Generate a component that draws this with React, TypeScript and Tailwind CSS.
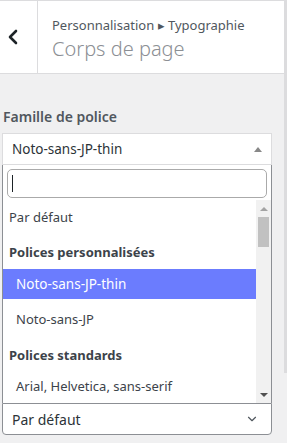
import { ChevronDown, ChevronLeft } from "lucide-react";

const font = { fontFamily: '"Noto Sans", "Open Sans", sans-serif' };

type Row = { label: string; kind: "option" | "group" | "child" | "active"; h: string };

const rows: Row[] = [
  { label: "Par défaut", kind: "option", h: "h-[36px]" },
  { label: "Polices personnalisées", kind: "group", h: "h-[33px]" },
  { label: "Noto-sans-JP-thin", kind: "active", h: "h-[30px]" },
  { label: "Noto-sans-JP", kind: "child", h: "h-[42px]" },
  { label: "Polices standards", kind: "group", h: "h-[29px]" },
  { label: "Arial, Helvetica, sans-serif", kind: "child", h: "h-[34px]" },
];

function OptionRow({ row }: { row: Row }) {
  if (row.kind === "group") {
    return (
      <div className={`${row.h} flex shrink-0 items-center pl-[6px] text-[13px] font-bold text-[#3c434a]`}>{row.label}</div>
    );
  }
  if (row.kind === "active") {
    return (
      <div className={`${row.h} flex shrink-0 items-center bg-[#6b7cfe] pl-[13px] text-[13.5px] text-white`}>{row.label}</div>
    );
  }
  return (
    <div
      className={`${row.h} flex shrink-0 items-center text-[13px] text-[#3c434a] ${row.kind === "child" ? "pl-[13px]" : "pl-[6px]"}`}
    >
      {row.label}
    </div>
  );
}

export default function App() {
  return (
    <div style={font} className="flex h-[443px] w-[287px] overflow-hidden bg-[#f0f0f1]">
      <div className="flex w-[284px] flex-col">
        <header className="flex h-[74px] shrink-0 border-y border-[#dcdcde] bg-white">
          <button className="flex w-[38px] items-center justify-start border-r border-[#dcdcde] pl-[1px] text-[#1d2327]">
            <ChevronLeft size={24} strokeWidth={2.6} />
          </button>
          <div className="flex flex-col pl-[14px] pt-[15px]">
            <span className="text-[13px] leading-[18px] text-[#50575e]">Personnalisation ▸ Typographie</span>
            <span className="mt-[2px] text-[20px] font-light leading-[26px] text-[#8c8f94]">Corps de page</span>
          </div>
        </header>

        <div className="px-[2px] pt-[33px]">
          <p className="pl-[1px] text-[14px] font-semibold leading-[20px] text-[#50575e]">Famille de police</p>

          <div className="mt-[6px] flex h-[32px] w-[270px] items-center justify-between border border-[#dcdcde] bg-white pl-[9px] pr-[9px]">
            <span className="text-[13.5px] text-[#2c3338]">Noto-sans-JP-thin</span>
            <span className="h-0 w-0 border-x-[4px] border-b-[5px] border-x-transparent border-b-[#888]" />
          </div>

          <div className="relative w-[270px]">
            <div className="absolute left-0 top-0 z-10 flex h-[238px] w-[270px] flex-col border-x border-[#8c8f94] bg-white">
              <div className="px-[4px] pt-[4px]">
                <div className="flex h-[29px] items-center rounded-[5px] border border-[#aaaaaa] pl-[4px]">
                  <span className="h-[17px] w-px bg-[#1d2327]" />
                </div>
              </div>
              <div className="mt-[2px] flex min-h-0 flex-1">
                <div className="flex min-w-0 flex-1 flex-col overflow-hidden">
                  {rows.map((r) => (
                    <OptionRow key={r.label} row={r} />
                  ))}
                </div>
                <div className="flex w-[15px] flex-col items-center bg-[#f1f1f1]">
                  <span className="mt-[7px] h-0 w-0 border-x-[4px] border-b-[4px] border-x-transparent border-b-[#a3a3a3]" />
                  <span className="mt-[6px] h-[30px] w-[11px] bg-[#c1c1c1]" />
                  <span className="mt-auto mb-[6px] h-0 w-0 border-x-[4px] border-t-[4px] border-x-transparent border-t-[#505050]" />
                </div>
              </div>
            </div>
          </div>

          <div className="mt-[238px] flex h-[32px] w-[270px] items-center justify-between rounded-b-[4px] border border-[#8c8f94] bg-white pl-[9px] pr-[12px]">
            <span className="text-[14px] text-[#2c3338]">Par défaut</span>
            <ChevronDown size={14} strokeWidth={2} className="text-[#50575e]" />
          </div>
        </div>
      </div>
      <div className="flex w-[3px] flex-col">
        <div className="h-[373px] bg-[#dcdcde]" />
      </div>
    </div>
  );
}
